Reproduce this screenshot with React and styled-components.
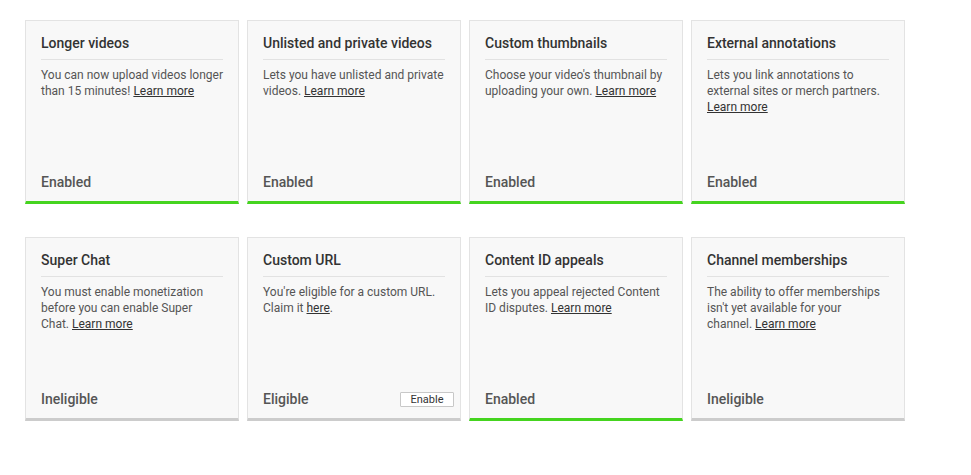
import React from "react";
import styled, { createGlobalStyle } from "styled-components";

const Global = createGlobalStyle`
  html, body { margin: 0; padding: 0; background: #fff; }
  body { font-family: Roboto, "Noto Sans", Arial, sans-serif; }
  * { box-sizing: border-box; }
`;

const Page = styled.div`
  padding: 20px 25px;
  display: flex;
  flex-direction: column;
  gap: 33px;
`;

const Row = styled.div`
  display: grid;
  grid-template-columns: repeat(4, 214px);
  gap: 8px;
`;

const Card = styled.div`
  height: 184px;
  background: #f8f8f8;
  border: 1px solid #e3e3e3;
  border-bottom: 3px solid ${(p) => (p.$on ? "#45d41f" : "#cccccc")};
  padding: 12px 15px 9px;
  display: flex;
  flex-direction: column;
`;

const Title = styled.div`
  font-size: 14px;
  line-height: 20px;
  font-weight: 500;
  color: #333;
  padding-bottom: 6px;
  border-bottom: 1px solid #e2e2e2;
`;

const Body = styled.div`
  margin-top: 7px;
  margin-right: -3px;
  font-size: 12px;
  line-height: 16px;
  color: #555;
  flex: 1;
`;

const Link = styled.a`
  color: #333;
  text-decoration: underline;
  cursor: pointer;
`;

const Footer = styled.div`
  display: flex;
  align-items: center;
  justify-content: space-between;
  height: 20px;
`;

const Status = styled.div`
  font-size: 14px;
  font-weight: 500;
  color: #555;
`;

const Button = styled.button`
  font-family: Roboto, Arial, sans-serif;
  font-size: 11px;
  line-height: 12px;
  width: 54px;
  height: 15px;
  padding: 0;
  margin-right: -9px;
  margin-top: 1px;
  background: #fff;
  color: #333;
  border: 1px solid #c8c8c8;
  border-radius: 1px;
`;

const rows = [
  [
    { t: "Longer videos", b: <>You can now upload videos longer than 15 minutes! <Link>Learn more</Link></>, s: "Enabled", on: true },
    { t: "Unlisted and private videos", b: <>Lets you have unlisted and private videos. <Link>Learn more</Link></>, s: "Enabled", on: true },
    { t: "Custom thumbnails", b: <>Choose your video's thumbnail by uploading your own. <Link>Learn more</Link></>, s: "Enabled", on: true },
    { t: "External annotations", b: <>Lets you link annotations to external sites or merch partners. <Link>Learn more</Link></>, s: "Enabled", on: true },
  ],
  [
    { t: "Super Chat", b: <>You must enable monetization before you can enable Super<br />Chat. <Link>Learn more</Link></>, s: "Ineligible", on: false },
    { t: "Custom URL", b: <>You're eligible for a custom URL. Claim it <Link>here</Link>.</>, s: "Eligible", on: false, btn: true },
    { t: "Content ID appeals", b: <>Lets you appeal rejected Content ID disputes. <Link>Learn more</Link></>, s: "Enabled", on: true },
    { t: "Channel memberships", b: <>The ability to offer memberships isn't yet available for your<br />channel. <Link>Learn more</Link></>, s: "Ineligible", on: false },
  ],
];

export default function App() {
  return (
    <>
      <Global />
      <Page>
        {rows.map((r, i) => (
          <Row key={i}>
            {r.map((c) => (
              <Card key={c.t} $on={c.on}>
                <Title>{c.t}</Title>
                <Body>{c.b}</Body>
                <Footer>
                  <Status>{c.s}</Status>
                  {c.btn && <Button>Enable</Button>}
                </Footer>
              </Card>
            ))}
          </Row>
        ))}
      </Page>
    </>
  );
}
